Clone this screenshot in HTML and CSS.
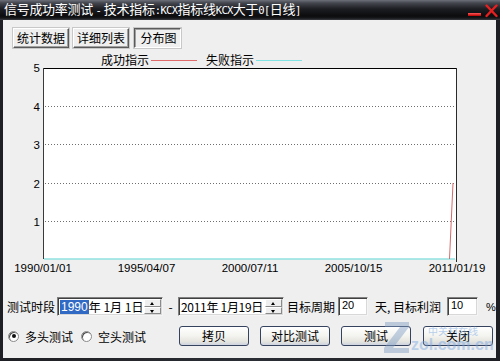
FILE: index.html
```html
<!DOCTYPE html>
<html>
<head>
<meta charset="utf-8">
<link rel="stylesheet" href="styles.css">
</head>
<body>
<div class="window">
  <div class="titlebar">
    <span class="title">信号成功率测试 <span class="lat">-</span> 技术指标<span class="lat">:KCX</span>指标线<span class="lat">KCX</span>大于<span class="lat">0[</span>日线<span class="lat">]</span></span>
    <svg class="tb-buttons" width="34" height="18" viewBox="466 0 34 18">
      <defs>
        <linearGradient id="rg" x1="0" y1="0" x2="0" y2="1">
          <stop offset="0" stop-color="#ff5a5a"/>
          <stop offset="1" stop-color="#b80000"/>
        </linearGradient>
      </defs>
      <rect x="468" y="12" width="13" height="3" fill="url(#rg)"/>
      <path d="M486.5 4.5 L496.5 15 M496.5 4.5 L486.5 15" stroke="#e62020" stroke-width="2.4" stroke-linecap="round"/>
    </svg>
  </div>
  <div class="client">
    <div class="tabs">
      <div class="tab t1">统计数据</div>
      <div class="tab t2">详细列表</div>
      <div class="tab t3 active">分布图</div>
    </div>
    <svg class="chart" width="493" height="228" viewBox="3 50 493 228">
      <text class="legend" x="101" y="65">成功指示</text>
      <line x1="151" y1="60.5" x2="197" y2="60.5" stroke="#e06a6a" stroke-width="1"/>
      <text class="legend" x="206" y="65">失败指示</text>
      <line x1="256" y1="60.5" x2="302" y2="60.5" stroke="#7fe3e3" stroke-width="1"/>

      <rect x="43" y="68" width="414" height="191" fill="#ffffff"/>
      <g stroke="#6e6e6e" stroke-width="1" stroke-dasharray="1 2">
        <line x1="45" y1="106.5" x2="456" y2="106.5"/>
        <line x1="45" y1="144.5" x2="456" y2="144.5"/>
        <line x1="45" y1="183.5" x2="456" y2="183.5"/>
        <line x1="45" y1="221.5" x2="456" y2="221.5"/>
      </g>
      <line x1="43" y1="68.5" x2="457" y2="68.5" stroke="#000"/>
      <line x1="43.5" y1="68" x2="43.5" y2="259" stroke="#3a3a3a"/>
      <line x1="456.5" y1="68" x2="456.5" y2="262" stroke="#2a2a2a"/>
      <line x1="44" y1="259" x2="455" y2="259" stroke="#8fe0e0" stroke-width="1.5"/>
      <line x1="453" y1="183" x2="449.5" y2="259" stroke="#d46a6a" stroke-width="1"/>

      <g class="ylab">
        <text x="40" y="72">5</text>
        <text x="40" y="111">4</text>
        <text x="40" y="149">3</text>
        <text x="40" y="188">2</text>
        <text x="40" y="226">1</text>
      </g>
      <g class="xlab">
        <text x="43" y="272">1990/01/01</text>
        <text x="146.5" y="272">1995/04/07</text>
        <text x="250" y="272">2000/07/11</text>
        <text x="353.5" y="272">2005/10/15</text>
        <text x="457" y="272">2011/01/19</text>
      </g>
    </svg>

    <div class="row row1">
      <span class="lbl">测试时段</span>
      <div class="field date d1">
        <span class="sel">1990</span><span class="dtxt">年&nbsp;1月&nbsp;1日</span>
        <span class="spin"><i class="up"></i><i class="dn"></i></span>
      </div>
      <span class="dash">-</span>
      <div class="field date d2">
        <span class="dtxt">2011年&nbsp;1月19日</span>
        <span class="spin"><i class="up"></i><i class="dn"></i></span>
      </div>
      <span class="lbl l2">目标周期</span>
      <div class="field inp i1">20</div>
      <span class="lbl l3">天, 目标利润</span>
      <div class="field inp i2">10</div>
      <span class="pct">%</span>
    </div>

    <div class="row row2">
      <span class="radio checked"></span>
      <span class="rlbl">多头测试</span>
      <span class="radio r2"></span>
      <span class="rlbl">空头测试</span>
      <button class="btn b1">拷贝</button>
      <button class="btn b2">对比测试</button>
      <button class="btn b3">测试</button>
      <button class="btn b4">关闭</button>
    </div>

    <div class="watermark">
      <svg class="wm-z" width="28" height="34" viewBox="0 0 28 34">
        <polygon points="2,2 26,2 26,7 10,28 26,28 26,33 1,33 1,28 17,7 2,7" fill="#7d9cc4"/>
      </svg>
      <span class="wm-cn">中关村在线</span>
      <span class="wm-en">zol.com.cn</span>
    </div>
  </div>
</div>
</body>
</html>
```

FILE: styles.css
```css
* { box-sizing: border-box; }
html, body { margin: 0; padding: 0; }
body {
  width: 500px;
  height: 361px;
  overflow: hidden;
  font-family: "Noto Sans CJK SC", "Liberation Sans", sans-serif;
  font-size: 12px;
  color: #000;
}
.window {
  width: 500px;
  height: 361px;
  background: linear-gradient(90deg, #1d1f24, #2c2e35 50%, #1d1f24);
  display: flex;
  flex-direction: column;
}
.titlebar {
  height: 20px;
  display: flex;
  align-items: center;
  background: linear-gradient(#6d7079 0, #44464e 3px, #1c1d22 9px, #0c0c0e 16px, #151619 18px, #3a3c43 20px);
  position: relative;
}
.title {
  color: #ffffff;
  font-size: 13px;
  line-height: 18px;
  padding-left: 4px;
  margin-top: -1px;
  white-space: nowrap;
  letter-spacing: -0.3px;
}
.title .lat {
  font-family: "DejaVu Sans Mono", "Liberation Mono", monospace;
  font-size: 10.5px;
  letter-spacing: -0.6px;
}
.tb-buttons {
  margin-left: auto;
  display: block;
}
.client {
  position: relative;
  margin-left: 3px;
  width: 493px;
  height: 338px;
  background: #efefef;
}
.tabs {
  display: flex;
  padding: 8px 0 0 10px;
  height: 28px;
}
.tab {
  height: 20px;
  line-height: 18px;
  text-align: center;
  border: 1px solid;
  border-color: #ffffff #5a5a5a #5a5a5a #ffffff;
  box-shadow: inset -1px -1px #a0a0a0;
  outline: 1px solid #c8c8c8;
  background: #efefef;
}
.t1 { width: 56px; }
.t2 { width: 56px; margin-left: 4px; }
.t3 { width: 47px; margin-left: 5px; }
.tab.active {
  border-color: #5a5a5a #ffffff #ffffff #5a5a5a;
  box-shadow: inset 1px 1px #a0a0a0;
  padding-left: 2px;
}
.chart {
  display: block;
  margin-top: 2px;
}
.legend {
  font-family: "Noto Sans CJK SC", sans-serif;
  font-size: 12px;
  fill: #000;
}
.ylab text {
  font-family: "Liberation Sans", sans-serif;
  font-size: 11.5px;
  text-anchor: end;
  fill: #000;
}
.xlab text {
  font-family: "Liberation Sans", sans-serif;
  font-size: 11.5px;
  text-anchor: middle;
  fill: #000;
}
.row {
  display: flex;
  align-items: center;
  white-space: nowrap;
}
.row1 {
  margin-top: 19px;
  height: 19px;
  padding-left: 4px;
}
.lbl { width: 48px; line-height: 19px; }
.field {
  height: 19px;
  background: #ffffff;
  border: 1px solid;
  border-color: #808080 #f4f4f4 #f4f4f4 #808080;
  box-shadow: inset 1px 1px #404040, inset -1px -1px #d8d8d8;
}
.date {
  width: 106px;
  display: flex;
  align-items: center;
  padding-left: 2px;
  position: relative;
  font-size: 12px;
}
.d1 { margin-left: 2px; }
.sel {
  background: #316ac5;
  color: #ffffff;
  font-family: "Liberation Sans", sans-serif;
  font-size: 12px;
  line-height: 14px;
  padding: 0 1px;
}
.dtxt { line-height: 15px; }
.d2 .dtxt { letter-spacing: -0.3px; }
.spin {
  position: absolute;
  right: 1px;
  top: 1px;
  bottom: 1px;
  width: 17px;
  display: flex;
  flex-direction: column;
  background: #efefef;
}
.spin i {
  flex: 1;
  position: relative;
  border: 1px solid;
  border-color: #ffffff #8a8a8a #8a8a8a #ffffff;
}
.spin i::after {
  content: "";
  position: absolute;
  left: 5px;
  width: 0;
  height: 0;
  border-left: 2.5px solid transparent;
  border-right: 2.5px solid transparent;
}
.spin .up::after { top: 2px; border-bottom: 3px solid #000; }
.spin .dn::after { top: 2px; border-top: 3px solid #000; }
.dash { width: 15px; text-align: center; }
.l2 { margin-left: 3px; }
.inp {
  width: 30px;
  margin-left: 3px;
  font-family: "Liberation Sans", sans-serif;
  font-size: 11px;
  line-height: 14px;
  padding-left: 3px;
}
.l3 { margin-left: 7px; width: 65px; }
.i2 { margin-left: 7px; width: 31px; }
.pct {
  margin-left: 8px;
  font-family: "Liberation Sans", sans-serif;
  font-size: 11px;
}
.row2 {
  margin-top: 10px;
  height: 20px;
  padding-left: 5px;
}
.radio {
  width: 11px;
  height: 11px;
  border-radius: 50%;
  background: #ffffff;
  border: 1px solid #8a8a8a;
  box-shadow: inset 1px 1px #505050;
  position: relative;
}
.radio.checked::after {
  content: "";
  position: absolute;
  left: 2.5px;
  top: 2.5px;
  width: 4px;
  height: 4px;
  border-radius: 50%;
  background: #111;
}
.rlbl { margin-left: 6px; }
.r2 { margin-left: 8px; }
.btn {
  height: 20px;
  width: 70px;
  padding: 0;
  font-family: "Noto Sans CJK SC", sans-serif;
  font-size: 12px;
  line-height: 18px;
  color: #000;
  border: 1px solid #36435f;
  border-radius: 3px;
  background: linear-gradient(#ffffff, #f3f3ef 50%, #e6e5df 80%, #cdd3e0);
}
.b1 { margin-left: 33px; }
.b2 { margin-left: 11px; }
.b3 { margin-left: 11px; }
.b4 { margin-left: 12px; }
.watermark {
  position: absolute;
  left: 378px;
  top: 299px;
  width: 115px;
  height: 36px;
  opacity: 0.45;
  pointer-events: none;
}
.wm-z {
  position: absolute;
  left: 2px;
  top: 1px;
}
.wm-cn {
  position: absolute;
  left: 47px;
  top: 6px;
  font-size: 10px;
  line-height: 11px;
  color: #6aa0e0;
}
.wm-en {
  position: absolute;
  left: 30px;
  top: 17px;
  font-family: "Liberation Sans", sans-serif;
  font-weight: bold;
  font-size: 16px;
  line-height: 17px;
  color: #7aa8e0;
}
```
